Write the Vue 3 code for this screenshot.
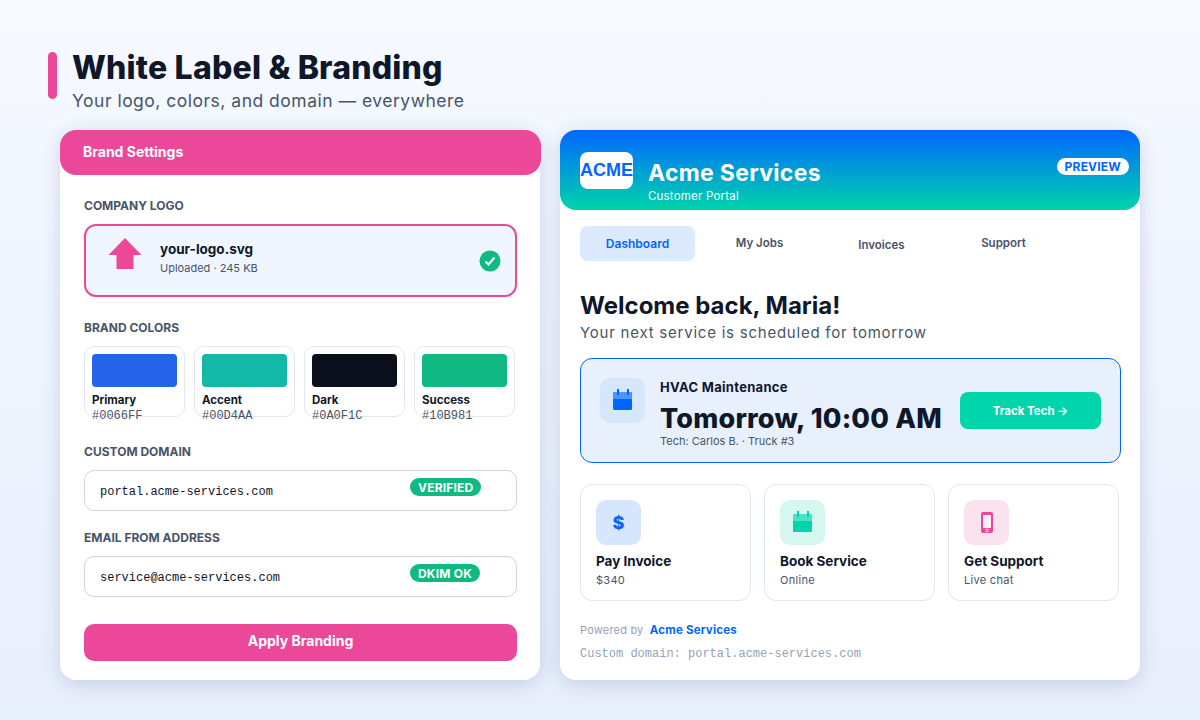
<template>
  <div class="page">
    <header class="head">
      <div class="accent"></div>
      <div>
        <h1>White Label &amp; Branding</h1>
        <p class="tagline">Your logo, colors, and domain — everywhere</p>
      </div>
    </header>

    <main class="cols">
      <section class="card settings">
        <div class="settings-head">Brand Settings</div>
        <div class="settings-body">
          <div class="label first">COMPANY LOGO</div>
          <div class="upload">
            <svg class="up-arrow" width="34" height="32" viewBox="0 0 34 32">
              <polygon points="17,0 33.5,17 25.5,17 25.5,31 8.5,31 8.5,17 0.5,17" fill="#ec4899" />
            </svg>
            <div class="upload-text">
              <div class="file">your-logo.svg</div>
              <div class="file-meta">Uploaded · 245 KB</div>
            </div>
            <svg class="check" width="22" height="22" viewBox="0 0 22 22">
              <circle cx="11" cy="11" r="10.5" fill="#10b981" />
              <path d="M6.5 11.5l3 3 6-7" fill="none" stroke="#fff" stroke-width="2" />
            </svg>
          </div>

          <div class="label">BRAND COLORS</div>
          <div class="swatches">
            <div v-for="c in colors" :key="c.name" class="swatch-card">
              <div class="swatch" :style="{ background: c.fill }"></div>
              <div class="swatch-name">{{ c.name }}</div>
              <div class="swatch-hex">{{ c.hex }}</div>
            </div>
          </div>

          <div class="label domain-label">CUSTOM DOMAIN</div>
          <div class="field">
            <span class="field-value">portal.acme-services.com</span>
            <span class="pill">VERIFIED</span>
          </div>

          <div class="label email-label">EMAIL FROM ADDRESS</div>
          <div class="field">
            <span class="field-value">service@acme-services.com</span>
            <span class="pill">DKIM OK</span>
          </div>

          <button class="apply">Apply Branding</button>
        </div>
      </section>

      <section class="card portal">
        <div class="portal-head">
          <div class="logo">ACME</div>
          <div class="portal-title">
            <div class="portal-name">Acme Services</div>
            <div class="portal-sub">Customer Portal</div>
          </div>
          <span class="preview">PREVIEW</span>
        </div>

        <div class="portal-body">
          <nav class="tabs">
            <div v-for="t in tabs" :key="t" class="tab" :class="{ active: t === 'Dashboard', low: t === 'Invoices' }">{{ t }}</div>
          </nav>

          <h2>Welcome back, Maria!</h2>
          <p class="next">Your next service is scheduled for tomorrow</p>

          <div class="appt">
            <div class="icon-box blue">
              <svg class="cal" width="19" height="21" viewBox="0 0 19 21">
                <rect x="0" y="3" width="19" height="18" rx="1.5" fill="#0066ff" />
                <rect x="0" y="3" width="19" height="7" fill="#4d94ff" />
                <rect x="4" y="0" width="2" height="6" fill="#0066ff" />
                <rect x="14" y="0" width="2" height="6" fill="#0066ff" />
              </svg>
            </div>
            <div class="appt-text">
              <div class="appt-kind">HVAC Maintenance</div>
              <div class="appt-time">Tomorrow, 10:00 AM</div>
              <div class="appt-tech">Tech: Carlos B. · Truck #3</div>
            </div>
            <button class="track">Track Tech →</button>
          </div>

          <div class="actions">
            <div class="action">
              <div class="icon-box blue"><span class="dollar">$</span></div>
              <div class="action-name">Pay Invoice</div>
              <div class="action-sub">$340</div>
            </div>
            <div class="action">
              <div class="icon-box mint">
                <svg class="cal" width="19" height="21" viewBox="0 0 19 21">
                  <rect x="0" y="3" width="19" height="18" rx="1.5" fill="#00d4aa" />
                  <rect x="0" y="3" width="19" height="7" fill="#4de1c4" />
                  <rect x="4" y="0" width="2" height="6" fill="#00d4aa" />
                  <rect x="14" y="0" width="2" height="6" fill="#00d4aa" />
                </svg>
              </div>
              <div class="action-name">Book Service</div>
              <div class="action-sub">Online</div>
            </div>
            <div class="action">
              <div class="icon-box pink">
                <svg class="phone" width="12" height="21" viewBox="0 0 12 21">
                  <rect x="0" y="0" width="12" height="21" rx="2" fill="#ec4899" />
                  <rect x="2" y="3" width="8" height="13" fill="#fdf0f7" />
                  <circle cx="6" cy="18.5" r="1.4" fill="#ec4899" stroke="#fdf0f7" stroke-width="0.9" />
                </svg>
              </div>
              <div class="action-name">Get Support</div>
              <div class="action-sub">Live chat</div>
            </div>
          </div>

          <div class="powered">Powered by <b>Acme Services</b></div>
          <div class="custom-domain">Custom domain: portal.acme-services.com</div>
        </div>
      </section>
    </main>
  </div>
</template>

<script setup>
const colors = [
  { name: 'Primary', hex: '#0066FF', fill: '#2563eb' },
  { name: 'Accent', hex: '#00D4AA', fill: '#14b8a6' },
  { name: 'Dark', hex: '#0A0F1C', fill: '#0a0f1c' },
  { name: 'Success', hex: '#10B981', fill: '#10b981' }
]
const tabs = ['Dashboard', 'My Jobs', 'Invoices', 'Support']
</script>

<style>
body {
  margin: 0;
}
</style>

<style scoped>
.page {
  box-sizing: border-box;
  width: 1200px;
  height: 720px;
  overflow: hidden;
  padding: 52px 60px 0 48px;
  background: linear-gradient(180deg, #f6f9ff 0%, #e8effc 100%);
  font-family: Inter, "Liberation Sans", sans-serif;
  color: #0f172a;
}

.head {
  display: flex;
  gap: 15px;
  height: 78px;
}

.accent {
  width: 9px;
  height: 47px;
  border-radius: 5px;
  background: #ec4899;
}

h1 {
  margin: 0;
  font-size: 32px;
  line-height: 31px;
  font-weight: 800;
  letter-spacing: 0.2px;
}

.tagline {
  margin: 7px 0 0;
  font-size: 17.5px;
  line-height: 22px;
  letter-spacing: 0.5px;
  color: #475569;
}

.cols {
  display: flex;
  gap: 20px;
  margin-left: 12px;
}

.card {
  height: 550px;
  border-radius: 16px;
  background: #fff;
  box-shadow: 0 4px 20px rgba(30, 60, 120, 0.18);
}

.settings {
  width: 480px;
}

.settings-head {
  box-sizing: border-box;
  width: 481px;
  height: 45px;
  padding-left: 23px;
  border-radius: 16px;
  background: #ec4899;
  color: #fff;
  font-size: 14px;
  font-weight: 700;
  line-height: 44px;
}

.settings-body {
  padding: 0 23px 0 24px;
}

.label {
  margin-top: 24px;
  font-size: 12px;
  line-height: 14px;
  font-weight: 700;
  color: #475569;
}

.upload {
  box-sizing: border-box;
  display: flex;
  align-items: center;
  height: 73px;
  margin-top: 11px;
  padding: 0 14px 0 22px;
  border: 2px solid #ec4899;
  border-radius: 12px;
  background: #eff6ff;
}

.up-arrow {
  margin-bottom: 13px;
}

.upload-text {
  flex: 1;
  margin-left: 18px;
  margin-bottom: 6px;
}

.file {
  font-size: 13.5px;
  line-height: 18px;
  font-weight: 700;
}

.file-meta {
  margin-top: 3px;
  font-size: 11px;
  line-height: 14px;
  color: #475569;
}

.swatches {
  display: grid;
  grid-template-columns: repeat(4, 101px);
  gap: 9px;
  margin-top: 11px;
}

.swatch-card {
  box-sizing: border-box;
  height: 71px;
  padding: 7px;
  border: 1px solid #e2e8f0;
  border-radius: 10px;
  background: #fff;
}

.swatch {
  height: 33px;
  border-radius: 4px;
}

.swatch-name {
  margin-top: 6px;
  font-size: 11.5px;
  line-height: 14px;
  font-weight: 700;
}

.swatch-hex {
  margin-top: 2px;
  font-family: "Liberation Mono", monospace;
  font-size: 12px;
  line-height: 15px;
  color: #475569;
}

.domain-label {
  margin-top: 28px;
}

.email-label {
  margin-top: 20px;
}

.field {
  box-sizing: border-box;
  display: flex;
  height: 41px;
  margin-top: 11px;
  padding: 7px 15px;
  border: 1px solid #cbd5e1;
  border-radius: 10px;
}

.field-value {
  width: 310px;
  padding-top: 7px;
  font-family: "Liberation Mono", monospace;
  font-size: 12px;
  line-height: 14px;
}

.pill {
  align-self: flex-start;
  height: 18px;
  padding: 0 8px;
  border-radius: 9px;
  background: #10b981;
  color: #fff;
  font-size: 12px;
  line-height: 19px;
  font-weight: 700;
  letter-spacing: 0.2px;
}

.apply {
  display: block;
  width: 100%;
  height: 37px;
  margin-top: 27px;
  padding-bottom: 6px;
  border: 0;
  border-radius: 10px;
  background: #ec4899;
  color: #fff;
  font-family: inherit;
  font-size: 14px;
  font-weight: 700;
}

.portal {
  width: 580px;
}

.portal-head {
  display: flex;
  align-items: flex-start;
  box-sizing: border-box;
  height: 80px;
  padding: 22px 11px 0 20px;
  border-radius: 16px;
  background: linear-gradient(180deg, #0066ff 0%, #00d4aa 100%);
  color: #fff;
}

.logo {
  box-sizing: border-box;
  width: 53px;
  height: 37px;
  padding-right: 2px;
  border-radius: 8px;
  background: #fff;
  color: #0066ff;
  font-family: "Liberation Sans", sans-serif;
  font-size: 18px;
  font-weight: 700;
  line-height: 36px;
  text-align: center;
}

.portal-title {
  flex: 1;
  margin-left: 15px;
  padding-top: 7px;
}

.portal-name {
  font-size: 23px;
  line-height: 28px;
  font-weight: 700;
  letter-spacing: 0.3px;
}

.portal-sub {
  margin-top: 2px;
  font-size: 11.5px;
  line-height: 14px;
  letter-spacing: 0.2px;
}

.preview {
  height: 17px;
  margin-top: 6px;
  padding: 0 8px;
  border-radius: 9px;
  background: #fff;
  color: #0066ff;
  font-size: 12px;
  line-height: 18px;
  font-weight: 700;
  letter-spacing: 0.2px;
}

.portal-body {
  padding: 16px 20px 0;
}

.tabs {
  display: flex;
  gap: 7px;
}

.tab {
  width: 115px;
  height: 35px;
  border-radius: 8px;
  color: #475569;
  font-size: 11.5px;
  line-height: 34px;
  font-weight: 600;
  text-align: center;
}

.tab.active {
  background: #dbeafe;
  color: #0066ff;
  font-size: 12px;
  line-height: 36px;
}

.tab.low {
  line-height: 38px;
}

h2 {
  margin: 31px 0 0;
  font-size: 24px;
  line-height: 28px;
  font-weight: 700;
}

.next {
  margin: 3px 0 0;
  font-size: 15px;
  line-height: 20px;
  letter-spacing: 0.77px;
  color: #475569;
}

.appt {
  box-sizing: border-box;
  display: flex;
  align-items: center;
  width: 541px;
  height: 105px;
  margin-top: 15px;
  padding: 0 19px;
  border: 1px solid #0066ff;
  border-radius: 12px;
  background: #e8f0fe;
}

.icon-box {
  flex: none;
  display: flex;
  align-items: center;
  justify-content: center;
  width: 45px;
  height: 45px;
  border-radius: 10px;
}

.cal {
  margin-bottom: 2px;
}

.phone {
  margin-bottom: 1px;
}

.appt .icon-box {
  align-self: flex-start;
  margin-top: 19px;
}

.blue {
  background: #d6e6fd;
}

.mint {
  background: #d5f7f0;
}

.pink {
  background: #fce1ef;
}

.appt-text {
  flex: 1;
  margin-left: 15px;
  padding-top: 6px;
}

.appt-kind {
  font-size: 13px;
  line-height: 16px;
  font-weight: 700;
  letter-spacing: 0.3px;
}

.appt-time {
  margin-top: 8px;
  font-size: 27px;
  line-height: 32px;
  font-weight: 800;
  letter-spacing: 0.2px;
}

.appt-tech {
  margin-top: -1px;
  font-size: 11px;
  line-height: 14px;
  color: #475569;
}

.track {
  width: 141px;
  height: 37px;
  border: 0;
  border-radius: 8px;
  background: #00d4aa;
  color: #fff;
  font-family: inherit;
  font-size: 11.5px;
  font-weight: 700;
}

.actions {
  display: flex;
  gap: 13px;
  margin-top: 21px;
}

.action {
  box-sizing: border-box;
  width: 171px;
  height: 117px;
  padding: 15px;
  border: 1px solid #e2e8f0;
  border-radius: 12px;
}

.dollar {
  color: #0066ff;
  font-size: 18px;
  font-weight: 800;
}

.action-name {
  margin-top: 7px;
  font-size: 13.5px;
  line-height: 18px;
  font-weight: 700;
}

.action-sub {
  margin-top: 3px;
  font-size: 11px;
  line-height: 14px;
  letter-spacing: 0.3px;
  color: #475569;
}

.powered {
  margin-top: 22px;
  font-size: 11px;
  line-height: 14px;
  letter-spacing: 0.2px;
  color: #94a3b8;
}

.powered b {
  margin-left: 3px;
  font-size: 11.5px;
  letter-spacing: 0.2px;
  color: #0066ff;
}

.custom-domain {
  margin-top: 9px;
  font-family: "Liberation Mono", monospace;
  font-size: 12px;
  line-height: 16px;
  color: #94a3b8;
}
</style>
